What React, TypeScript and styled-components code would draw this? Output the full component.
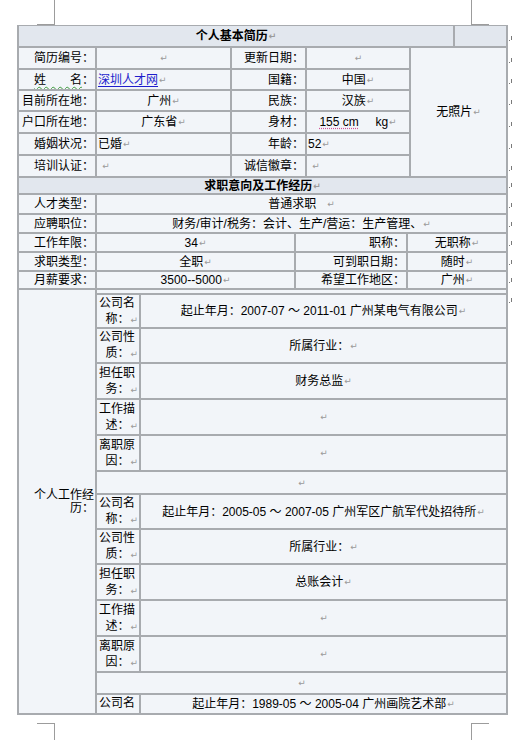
import React from 'react';
import styled, { createGlobalStyle, css } from 'styled-components';

const LINE = '#a8abaf';
const CELL = '#f2f5f9';
const HEAD = '#e2e7ee';

const GlobalStyle = createGlobalStyle`
  html, body { margin: 0; padding: 0; background: #ffffff; }
  body {
    font-family: "Liberation Sans", "Noto Sans CJK SC", sans-serif;
    font-size: 12px;
    color: #000;
    text-spacing-trim: space-all;
  }
  * { box-sizing: border-box; }
`;

const Page = styled.div`
  width: 530px;
  height: 740px;
  display: flex;
  flex-direction: column;
  overflow: hidden;
  background: #fff;
`;

const CropRow = styled.div<{ $bottom?: boolean }>`
  display: flex;
  justify-content: space-between;
  padding: 0 41px 0 37px;
  height: ${p => (p.$bottom ? 17 : 25)}px;
  flex-shrink: 0;
  ${p => p.$bottom && css`margin-top: auto;`}
`;

type Corner = 'tl' | 'tr' | 'bl' | 'br';
const Crop = styled.div<{ $corner: Corner }>`
  width: 18px;
  height: 100%;
  border: 0 solid #9c9c9c;
  ${p => p.$corner === 'tl' && css`border-right-width: 1px; border-bottom-width: 1px;`}
  ${p => p.$corner === 'tr' && css`border-left-width: 1px; border-bottom-width: 1px;`}
  ${p => p.$corner === 'bl' && css`border-right-width: 1px; border-top-width: 1px;`}
  ${p => p.$corner === 'br' && css`border-left-width: 1px; border-top-width: 1px;`}
`;

const Sheet = styled.div`
  display: flex;
  align-items: flex-start;
  flex-shrink: 0;
`;

const Table = styled.div`
  margin-left: 17px;
  width: 491px;
  padding: 1px 2px 2px 2px;
  background: ${LINE};
  display: flex;
  flex-direction: column;
  gap: 2px;
`;

type Align = 'left' | 'center' | 'right';

const Cell = styled.div<{ $align?: Align; $head?: boolean; $bold?: boolean; $span?: number }>`
  display: flex;
  align-items: center;
  justify-content: ${p =>
    p.$align === 'left' ? 'flex-start' : p.$align === 'right' ? 'flex-end' : 'center'};
  padding: 0 1px;
  background: ${p => (p.$head ? HEAD : CELL)};
  font-weight: ${p => (p.$bold ? 700 : 400)};
  line-height: 16px;
  white-space: nowrap;
  overflow: hidden;
  min-width: 0;
  ${p => p.$span && css`grid-column: span ${p.$span};`}
`;

const TitleRow = styled.div`
  display: grid;
  grid-template-columns: 434px 51px;
  gap: 2px;
  height: 20px;
`;

const SectionTitle = styled(Cell)`
  height: 15px;
`;

const BasicGrid = styled.div`
  display: grid;
  grid-template-columns: 76px 133px 73px 102px 95px;
  grid-template-rows: 20px 19px 19px 20px 20px 20px;
  gap: 2px;
`;

const Photo = styled(Cell)`
  grid-column: 5;
  grid-row: 1 / -1;
`;

const JobGrid = styled.div`
  display: grid;
  grid-template-columns: 76px 197px 110px 98px;
  grid-template-rows: 18px 17px 17px 17px 16px;
  gap: 2px;
`;

const WorkRow = styled.div`
  display: grid;
  grid-template-columns: 76px 409px;
  gap: 2px;
`;

const WorkLabel = styled.div`
  background: ${CELL};
  display: flex;
  align-items: center;
  justify-content: flex-end;
  text-align: right;
  line-height: 13px;
  padding: 0 1px;
`;

const WorkBody = styled.div`
  background: ${CELL};
  padding-top: 3px;
`;

const Nested = styled.div<{ $rows: string }>`
  display: grid;
  grid-template-columns: 42px 365px;
  grid-template-rows: ${p => p.$rows};
  gap: 2px;
  padding-top: 2px;
  background: ${LINE};
`;

const NestedLabel = styled.div<{ $top?: boolean }>`
  background: ${CELL};
  display: flex;
  flex-direction: column;
  justify-content: ${p => (p.$top ? 'flex-start' : 'center')};
  padding: 0 1px 0 2px;
  overflow: hidden;
`;

const LabelLine = styled.div<{ $end?: boolean }>`
  line-height: 16px;
  white-space: nowrap;
  text-align: ${p => (p.$end ? 'right' : 'left')};
`;

const FullCell = styled(Cell)`
  grid-column: 1 / -1;
`;

const RetMark = styled.span`
  font-family: "DejaVu Sans", sans-serif;
  font-size: 9px;
  color: #9a9a9a;
  margin-left: 1px;
  line-height: 16px;
`;

const Link = styled.span`
  color: #1d1dcc;
  text-decoration: underline;
  text-underline-offset: 2px;
`;

const Squiggle = styled.span`
  text-decoration: underline wavy #3a9a3a;
  text-decoration-thickness: 1px;
  text-underline-offset: 2px;
`;

const Dotted = styled.span`
  text-decoration: underline dotted #d2559a;
  text-underline-offset: 2px;
`;

const RowMarks = styled.div`
  display: flex;
  flex-direction: column;
  padding-left: 1px;
`;

const MarkSlot = styled.div<{ $h: number }>`
  height: ${p => p.$h}px;
  display: flex;
  align-items: flex-end;
  padding-bottom: 5px;
`;

const R = () => <RetMark>↵</RetMark>;

const EndMark = () => (
  <svg width="5" height="5" viewBox="0 0 5 5">
    <rect x="0" y="4" width="1" height="1" fill="#7a7a7a" />
    <rect x="2" y="0" width="1" height="4" fill="#7a7a7a" />
  </svg>
);

const MARK_PITCHES = [21, 22, 21, 21, 22, 22, 22, 17, 20, 19, 19, 19, 18, 20];

const LABELS: [string, string][] = [
  ['公司名', '称：'],
  ['公司性', '质：'],
  ['担任职', '务：'],
  ['工作描', '述：'],
  ['离职原', '因：'],
];

const JOBS = [
  {
    values: ['起止年月：2007-07 ～ 2011-01 广州某电气有限公司', '所属行业：', '财务总监 ', '', ''],
    heights: [32, 33, 34, 34, 34],
    blank: 21,
  },
  {
    values: ['起止年月：2005-05 ～ 2007-05 广州军区广航军代处招待所', '所属行业：', '总账会计 ', '', ''],
    heights: [33, 33, 34, 34, 34],
    blank: 20,
  },
];

const LAST_HEIGHT = 18;

export default function App() {
  const rows =
    JOBS.map(j => [...j.heights, j.blank].map(h => `${h}px`).join(' ')).join(' ') + ` ${LAST_HEIGHT}px`;

  return (
    <Page>
      <GlobalStyle />
      <CropRow>
        <Crop $corner="tl" />
        <Crop $corner="tr" />
      </CropRow>
      <Sheet>
        <Table>
          <TitleRow>
            <Cell $head $bold>
              个人基本简历<R />
            </Cell>
            <Cell $head />
          </TitleRow>

          <BasicGrid>
            <Cell $align="right">简历编号：</Cell>
            <Cell><R /></Cell>
            <Cell $align="right">更新日期：</Cell>
            <Cell><R /></Cell>
            <Photo>无照片<R /></Photo>

            <Cell $align="right"><Squiggle>姓　　名</Squiggle>：</Cell>
            <Cell $align="left"><Link>深圳人才网</Link><R /></Cell>
            <Cell $align="right">国籍：</Cell>
            <Cell>中国<R /></Cell>

            <Cell $align="right">目前所在地：</Cell>
            <Cell>广州<R /></Cell>
            <Cell $align="right">民族：</Cell>
            <Cell>汉族<R /></Cell>

            <Cell $align="right">户口所在地：</Cell>
            <Cell>广东省<R /></Cell>
            <Cell $align="right">身材：</Cell>
            <Cell><Dotted>155 cm</Dotted>&nbsp;&nbsp;&nbsp;&nbsp;&nbsp;kg<R /></Cell>

            <Cell $align="right">婚姻状况：</Cell>
            <Cell $align="left">已婚<R /></Cell>
            <Cell $align="right">年龄：</Cell>
            <Cell $align="left">52<R /></Cell>

            <Cell $align="right">培训认证：</Cell>
            <Cell $align="left">&nbsp;<R /></Cell>
            <Cell $align="right">诚信徽章：</Cell>
            <Cell $align="left">&nbsp;<R /></Cell>
          </BasicGrid>

          <SectionTitle $head $bold>
            求职意向及工作经历<R />
          </SectionTitle>

          <JobGrid>
            <Cell $align="right">人才类型：</Cell>
            <Cell $span={3}>普通求职&nbsp;&nbsp;&nbsp;<R /></Cell>

            <Cell $align="right">应聘职位：</Cell>
            <Cell $span={3}>财务/审计/税务：会计、生产/营运：生产管理、<R /></Cell>

            <Cell $align="right">工作年限：</Cell>
            <Cell>34<R /></Cell>
            <Cell $align="right">职称：</Cell>
            <Cell>无职称<R /></Cell>

            <Cell $align="right">求职类型：</Cell>
            <Cell>全职<R /></Cell>
            <Cell $align="right">可到职日期：</Cell>
            <Cell>随时<R /></Cell>

            <Cell $align="right">月薪要求：</Cell>
            <Cell>3500--5000<R /></Cell>
            <Cell $align="right">希望工作地区：</Cell>
            <Cell>广州<R /></Cell>
          </JobGrid>

          <WorkRow>
            <WorkLabel>
              个人工作经
              <br />
              历：
            </WorkLabel>
            <WorkBody>
              <Nested $rows={rows}>
                {JOBS.map((job, ji) => (
                  <React.Fragment key={ji}>
                    {LABELS.map(([first, rest], li) => (
                      <React.Fragment key={li}>
                        <NestedLabel>
                          <LabelLine>{first}</LabelLine>
                          <LabelLine $end>
                            {rest}
                            <R />
                          </LabelLine>
                        </NestedLabel>
                        <Cell>
                          {job.values[li]}
                          <R />
                        </Cell>
                      </React.Fragment>
                    ))}
                    <FullCell>
                      <R />
                    </FullCell>
                  </React.Fragment>
                ))}
                <NestedLabel $top>
                  <LabelLine>公司名</LabelLine>
                </NestedLabel>
                <Cell>
                  起止年月：1989-05 ～ 2005-04 广州画院艺术部<R />
                </Cell>
              </Nested>
            </WorkBody>
          </WorkRow>
        </Table>
        <RowMarks>
          {MARK_PITCHES.map((h, i) => (
            <MarkSlot key={i} $h={h}>
              <EndMark />
            </MarkSlot>
          ))}
        </RowMarks>
      </Sheet>
      <CropRow $bottom>
        <Crop $corner="bl" />
        <Crop $corner="br" />
      </CropRow>
    </Page>
  );
}
